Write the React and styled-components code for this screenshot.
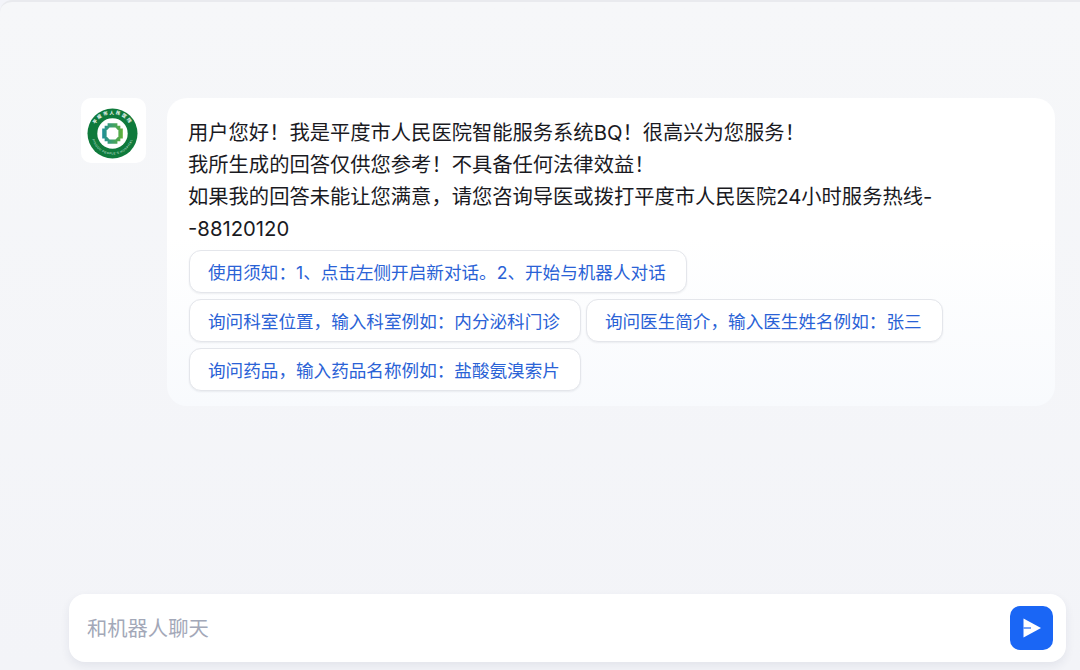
import styled, { createGlobalStyle } from "styled-components"

const GlobalStyle = createGlobalStyle`
    html, body {
        margin: 0;
        padding: 0;
        background: #f3f4f9;
    }
    * {
        box-sizing: border-box;
    }
`

const Page = styled.div`
    width: 1080px;
    height: 670px;
    display: flex;
    flex-direction: column;
    overflow: hidden;
    background: linear-gradient(180deg, #f6f7f9 0%, #f3f4f8 100%);
    border-top: 2px solid #e9eaee;
    border-radius: 12px 0 0 0;
    font-family: Inter, "Noto Sans CJK SC", "Noto Sans", sans-serif;
`
const ChatArea = styled.div`
    flex: 1;
    padding: 96px 25px 0 81px;
`
const Message = styled.div`
    display: flex;
    align-items: flex-start;
    gap: 21px;
`
const Avatar = styled.div`
    width: 65px;
    height: 65px;
    flex-shrink: 0;
    display: flex;
    justify-content: center;
    align-items: center;
    padding: 5px 2px 0 0;
    background: #fff;
    border-radius: 10px;
`
const Bubble = styled.div`
    flex: 1;
    padding: 19px 21px 15px;
    background: linear-gradient(180deg, #ffffff 0%, #ffffff 45%, #f8fafd 100%);
    border-radius: 20px;
`
const Greeting = styled.div`
    width: 760px;
    font-size: 20.3px;
    line-height: 32px;
    color: #1a1a1f;
    margin-bottom: 5px;
`
const Suggestions = styled.div`
    display: flex;
    flex-wrap: wrap;
    width: 790px;
    gap: 6px 5px;
    padding-left: 1px;
`
const Suggestion = styled.button`
    height: 43px;
    padding: 0 20px 0 18px;
    display: flex;
    align-items: center;
    font-family: inherit;
    font-size: 17.6px;
    color: #2a62d6;
    background: #fff;
    border: 1px solid #e4e6eb;
    border-radius: 12px;
    box-shadow: 0 1px 2px rgba(30, 40, 70, 0.07);
    cursor: pointer;
`
const Composer = styled.div`
    height: 68px;
    margin: 0 14px 8px 69px;
    padding: 0 13px 0 16px;
    display: flex;
    align-items: center;
    background: #fff;
    border-radius: 16px;
    box-shadow: 0 4px 10px rgba(40, 50, 90, 0.08);
`
const Input = styled.input`
    flex: 1;
    border: none;
    outline: none;
    background: transparent;
    font-family: inherit;
    font-size: 20.3px;
    color: #1a1a1f;

    &::placeholder {
        color: #a3a8b8;
        opacity: 1;
    }
`
const SendButton = styled.button`
    width: 43.5px;
    height: 43.5px;
    padding: 0;
    display: flex;
    justify-content: center;
    align-items: center;
    background: #1a66f5;
    border: none;
    border-radius: 10px;
    cursor: pointer;
`

const Logo = () => (
    <svg width="51" height="51" viewBox="0 0 52 52">
        <defs>
            <path id="ringTop" d="M6 26a20 20 0 0 1 40 0" />
            <path id="ringBottom" d="M4.500 26a21.500 21.500 0 0 0 43 0" />
            <linearGradient id="crossFill" x1="0" y1="0" x2="1" y2="0">
                <stop offset="0" stopColor="#1f8f98" />
                <stop offset="1" stopColor="#5fb03a" />
            </linearGradient>
        </defs>
        <circle cx="26" cy="26" r="25.5" fill="#0f7a3c" />
        <circle cx="26" cy="26" r="15.5" fill="#fff" />
        <text fontSize="4.6" fontWeight="700" fill="#fff" letterSpacing="1.6" fontFamily="Noto Sans CJK SC, sans-serif">
            <textPath href="#ringTop" startOffset="50%" textAnchor="middle">平度市人民医院</textPath>
        </text>
        <text fontSize="3" fill="#dff0e4" letterSpacing="0.5" fontFamily="Liberation Sans, sans-serif">
            <textPath href="#ringBottom" startOffset="50%" textAnchor="middle">PINGDU PEOPLE'S HOSPITAL</textPath>
        </text>
        <path
            d="M21 15.500h10v2.500h3v3h2.500v10H34v3h-3v2.500H21V34h-3v-3h-2.500V21H18v-3h3z"
            fill="url(#crossFill)"
        />
        <path d="M23 20h6l3 3v6l-3 3h-6l-3-3v-6z" fill="#fff" />
    </svg>
)

const SendIcon = () => (
    <svg width="20" height="20" viewBox="0 0 20 20">
        <path d="M2.500 0.500 L20 10 L2.500 19.500 Z" fill="#fff" />
        <path d="M2.500 9.400h7.500v1.200H2.500z" fill="#1a66f5" />
    </svg>
)

const suggestions = [
    "使用须知：1、点击左侧开启新对话。2、开始与机器人对话",
    "询问科室位置，输入科室例如：内分泌科门诊",
    "询问医生简介，输入医生姓名例如：张三",
    "询问药品，输入药品名称例如：盐酸氨溴索片",
]

const App = () => {
    return (
        <Page>
            <GlobalStyle />
            <ChatArea>
                <Message>
                    <Avatar>
                        <Logo />
                    </Avatar>
                    <Bubble>
                        <Greeting>
                            用户您好！我是平度市人民医院智能服务系统BQ！很高兴为您服务！
                            <br />
                            我所生成的回答仅供您参考！不具备任何法律效益！
                            <br />
                            如果我的回答未能让您满意，请您咨询导医或拨打平度市人民医院24小时服务热线-
                            <br />
                            -88120120
                        </Greeting>
                        <Suggestions>
                            {suggestions.map((text, index) => (
                                <Suggestion key={index}>{text}</Suggestion>
                            ))}
                        </Suggestions>
                    </Bubble>
                </Message>
            </ChatArea>
            <Composer>
                <Input placeholder="和机器人聊天" />
                <SendButton>
                    <SendIcon />
                </SendButton>
            </Composer>
        </Page>
    )
}

export default App
